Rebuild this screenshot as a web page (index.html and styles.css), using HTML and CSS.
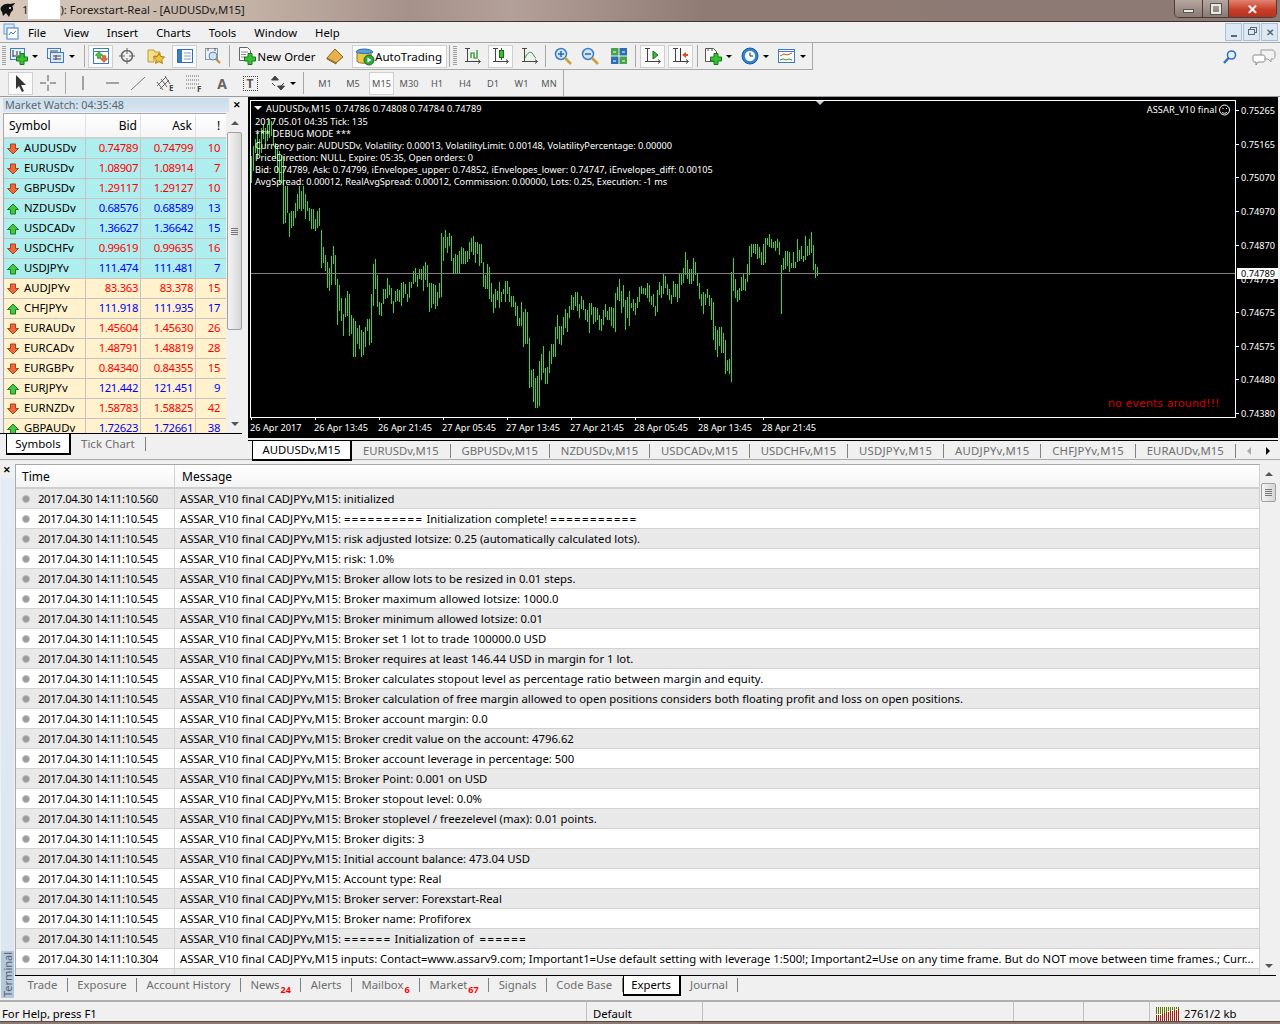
FILE: index.html
```html
<!DOCTYPE html>
<html lang="en">
<head>
    <meta charset="UTF-8">
    <title>Forexstart-Real - [AUDUSDv,M15]</title>
    <link rel="stylesheet" href="styles.css">
</head>
<body>
    <svg class="defs" width="0" height="0">
        <defs>
            <symbol id="plus" viewBox="0 0 12 12"><path d="M4 .5h4v3.500h3.500v4H8v3.500H4V8H.5V4H4z" fill="#35c035" stroke="#157a15"/></symbol>
            <symbol id="up" viewBox="0 0 12 12"><path d="M6 1l5.500 5.500H8.500V11h-5V6.500H.5z" fill="#43c843" stroke="#1d7a1d"/></symbol>
            <symbol id="down" viewBox="0 0 12 12"><path d="M6 11L.5 5.500h3V1h5v4.500h3z" fill="#f0683a" stroke="#a8401a"/></symbol>
            <symbol id="axes" viewBox="0 0 18 18"><path d="M3.500 1v14M1 14.500h15M6 1.500H1M14 12.500l2.500 2-2.500 2" fill="none" stroke="#444"/></symbol>
        </defs>
    </svg>

    <header class="titlebar">
        <svg class="bull" width="16" height="18" viewBox="0 0 16 18"><path d="M1 5C3 2 7 1 10 2l5-1c-1 2-2 3-3 3 2 2 1 5-1 6l-2 5-3-4-3 3-1-4C1 9 0 7 1 5z" fill="#111"/><circle cx="10" cy="6" r="1" fill="#fff"/></svg>
        <span class="title-one">1</span>
        <span class="title-mask"></span>
        <span class="title-text">): Forexstart-Real - [AUDUSDv,M15]</span>
        <div class="win-buttons">
            <span class="win-btn win-min"><i></i></span>
            <span class="win-btn win-max"><i></i></span>
            <span class="win-btn win-close">✕</span>
        </div>
    </header>

    <nav class="menubar">
        <svg class="menu-icon" width="16" height="18" viewBox="0 0 16 18"><rect x="1" y="1" width="10" height="10" fill="#dbe9f8" stroke="#6d9ed4"/><rect x="4" y="5" width="11" height="11" fill="#fff" stroke="#3d7cc2"/><path d="M6 12l2-3 2 2 3-3" fill="none" stroke="#3d7cc2"/></svg>
        <span class="menu-item">File</span>
        <span class="menu-item">View</span>
        <span class="menu-item">Insert</span>
        <span class="menu-item">Charts</span>
        <span class="menu-item">Tools</span>
        <span class="menu-item">Window</span>
        <span class="menu-item">Help</span>
        <div class="mdi-buttons">
            <span class="mdi-btn"><i class="mdi-min"></i></span>
            <span class="mdi-btn"><i class="mdi-restore"></i></span>
            <span class="mdi-btn mdi-x">✕</span>
        </div>
    </nav>

    <div class="toolrow">
        <div class="toolbar toolbar-main">
            <span class="grip"></span>
            <span class="tool w36">
                <svg width="18" height="18" viewBox="0 0 18 18"><rect x=".5" y="1.500" width="14" height="11" fill="#e8f1fb" stroke="#3d7cc2"/><path d="M3 3v7M3 9h9M7 4v4M10 4v3" stroke="#333" fill="none"/><use href="#plus" x="6" y="6" width="12" height="12"/></svg>
                <b class="caret"></b>
            </span>
            <span class="tool w38">
                <svg width="18" height="18" viewBox="0 0 18 18"><rect x=".5" y="1.500" width="13" height="10" fill="#e8f1fb" stroke="#3d7cc2"/><rect x="3.500" y="5.500" width="13" height="10" fill="#dbe9f8" stroke="#3d7cc2"/><path d="M3 4h8M6 9h8M6 12h8M9 8v5" stroke="#445" fill="none"/></svg>
                <b class="caret"></b>
            </span>
            <span class="sep ml4"></span>
            <span class="tool pressed w25 ml3">
                <svg width="18" height="18" viewBox="0 0 18 18"><rect x="1.500" y="1.500" width="15" height="15" fill="#fff" stroke="#3d7cc2"/><path d="M1.500 4.500h15" stroke="#3d7cc2"/><use href="#up" x="3" y="4" width="8" height="8"/><use href="#down" x="8" y="8" width="8" height="8"/></svg>
            </span>
            <span class="tool w28">
                <svg width="18" height="18" viewBox="0 0 18 18"><circle cx="9" cy="9" r="5.500" fill="none" stroke="#666" stroke-width="1.500"/><path d="M9 1v6M9 11v6M1 9h6M11 9h6" stroke="#666"/></svg>
            </span>
            <span class="tool w29">
                <svg width="18" height="18" viewBox="0 0 18 18"><path d="M1 3h6l1 2h5v4H7v6H1z" fill="#f6dd8a" stroke="#b89a3c"/><path d="M12 6l1.700 3.500 3.800.5-2.800 2.600.7 3.800-3.400-1.800-3.400 1.800.7-3.800L6.500 10l3.800-.5z" fill="#f4c531" stroke="#a67c12"/></svg>
            </span>
            <span class="tool pressed w25 ml2">
                <svg width="18" height="18" viewBox="0 0 18 18"><rect x="1.500" y="2.500" width="15" height="13" fill="#fff" stroke="#2f6db5"/><rect x="2" y="3" width="4" height="12" fill="#3d7cc2"/><path d="M8 6h7M8 9h7M8 12h7" stroke="#7a9cc4"/></svg>
            </span>
            <span class="tool w32">
                <svg width="18" height="18" viewBox="0 0 18 18"><rect x="1.500" y="1.500" width="12" height="11" fill="#eef2f7" stroke="#8a94a3"/><path d="M4 1v3M11 1v3" stroke="#556"/><circle cx="9" cy="9" r="4" fill="#cfe3f5" stroke="#5e87b0"/><path d="M12 12l4 4" stroke="#b98a2c" stroke-width="2"/></svg>
            </span>
            <span class="sep"></span>
            <span class="tool w88 text-tool">
                <svg width="18" height="20" viewBox="0 0 18 20"><path d="M1.500 1.500h8l3 3v10h-11z" fill="#fff" stroke="#666"/><path d="M3 6h7M3 8.500h5M3 11h4" stroke="#888"/><use href="#plus" x="6" y="7" width="12" height="12"/></svg>
                <span>New Order</span>
            </span>
            <span class="tool w34">
                <svg width="18" height="18" viewBox="0 0 18 18"><path d="M1 11L9 2l8 8-7 6z" fill="#e8b24a" stroke="#8a641c"/><path d="M1 11l9 5v1L1 12z" fill="#fff3c8" stroke="#8a641c"/></svg>
            </span>
            <span class="tool pressed w95 auto-tool">
                <svg width="20" height="20" viewBox="0 0 20 20"><path d="M2 6c0-3 14-3 14 0v9c0 3-14 3-14 0z" fill="#ecc84a" stroke="#8c7420"/><path d="M1 6c1-4 15-4 17 0-3 2-14 2-17 0z" fill="#5f9fd8" stroke="#2f6da8"/><circle cx="14" cy="14" r="5" fill="#2fa83a" stroke="#1a6e22"/><path d="M12.500 11.500l4 2.500-4 2.500z" fill="#fff"/></svg>
                <span>AutoTrading</span>
            </span>
            <span class="sep ml2"></span>
            <span class="grip ml3"></span>
            <span class="tool w24 ml4">
                <svg width="18" height="18" viewBox="0 0 18 18"><use href="#axes"/><path d="M7 11V6h3v5h3V3" fill="none" stroke="#1e8a1e" stroke-width="1.200"/></svg>
            </span>
            <span class="tool pressed w25 ml3">
                <svg width="18" height="18" viewBox="0 0 18 18"><use href="#axes"/><path d="M9.500 1v12" stroke="#1e6a1e"/><rect x="7.500" y="3.500" width="4" height="7" fill="#35c035" stroke="#156a15"/></svg>
            </span>
            <span class="tool w26 ml4">
                <svg width="18" height="18" viewBox="0 0 18 18"><use href="#axes"/><path d="M4 11c2-5 5-7 7-5s2 4 4 5" fill="none" stroke="#1e9a3a"/></svg>
            </span>
            <span class="sep ml2"></span>
            <span class="tool w27 ml3">
                <svg width="18" height="18" viewBox="0 0 18 18"><circle cx="7" cy="7" r="5.500" fill="#cfe6fa" stroke="#3d7cc2" stroke-width="1.500"/><path d="M4 7h6M7 4v6" stroke="#2c64a8" stroke-width="1.500"/><path d="M11 11l6 6" stroke="#c9a033" stroke-width="2.500"/></svg>
            </span>
            <span class="tool w28">
                <svg width="18" height="18" viewBox="0 0 18 18"><circle cx="7" cy="7" r="5.500" fill="#cfe6fa" stroke="#3d7cc2" stroke-width="1.500"/><path d="M4 7h6" stroke="#2c64a8" stroke-width="1.500"/><path d="M11 11l6 6" stroke="#c9a033" stroke-width="2.500"/></svg>
            </span>
            <span class="tool w29">
                <svg width="18" height="18" viewBox="0 0 18 18"><rect x="1" y="1" width="7.500" height="7.500" fill="#47a447"/><rect x="9.500" y="1" width="7.500" height="7.500" fill="#2f6db5"/><rect x="1" y="9.500" width="7.500" height="7.500" fill="#2f6db5"/><rect x="9.500" y="9.500" width="7.500" height="7.500" fill="#47a447"/><path d="M3 5h3M12 5h3M3 14h3M12 14h3" stroke="#fff"/></svg>
            </span>
            <span class="sep ml2"></span>
            <span class="tool pressed w25 ml4">
                <svg width="18" height="18" viewBox="0 0 18 18"><use href="#axes"/><path d="M9 4l5 4-5 4z" fill="#35c035" stroke="#156a15"/></svg>
            </span>
            <span class="tool pressed w25 ml3">
                <svg width="18" height="18" viewBox="0 0 18 18"><use href="#axes"/><path d="M8.500 1v13" stroke="#333"/><path d="M10 8l4-3v2h2v2h-2v2z" fill="#d9531e"/></svg>
            </span>
            <span class="sep ml4"></span>
            <span class="tool w34 ml3">
                <svg width="18" height="18" viewBox="0 0 18 18"><path d="M1.500 1.500h8l3 3v10h-11z" fill="#fff" stroke="#555"/><path d="M4 1v3M8 1v3" stroke="#555"/><use href="#plus" x="6" y="6" width="12" height="12"/></svg>
                <b class="caret"></b>
            </span>
            <span class="tool w34 ml3">
                <svg width="18" height="18" viewBox="0 0 18 18"><circle cx="9" cy="9" r="8" fill="#2f80d0" stroke="#1c5a9c"/><circle cx="9" cy="9" r="5.200" fill="#f4f6f8"/><path d="M9 5.500V9h3" fill="none" stroke="#333"/></svg>
                <b class="caret"></b>
            </span>
            <span class="tool w34 ml3">
                <svg width="18" height="18" viewBox="0 0 18 18"><rect x=".5" y="2.500" width="16" height="13" fill="#fff" stroke="#3d7cc2"/><path d="M.5 4.500h16" stroke="#3d7cc2"/><path d="M2 9l4-2 3 1 5-2" fill="none" stroke="#c2571a"/><path d="M2 13l3-1 3 1 3-1 3 1" fill="none" stroke="#2f9a2f"/></svg>
                <b class="caret"></b>
            </span>
        </div>
        <div class="help-icons">
            <svg width="16" height="16" viewBox="0 0 16 16"><circle cx="9.500" cy="6" r="4" fill="#eaf3fc" stroke="#2f6fc8" stroke-width="1.600"/><path d="M6.500 9L2 14" stroke="#2f6fc8" stroke-width="2.400"/></svg>
            <svg width="24" height="18" viewBox="0 0 24 18"><path d="M9 2h11c2 0 3 1 3 3v3c0 2-1 3-3 3h-1v3l-3-3H9z" fill="#f2f2f2" stroke="#9a9a9a"/><path d="M2 7h9c1 0 2 1 2 2v3c0 1-1 2-2 2H6l-2 3v-3H2c-.5 0-1-1-1-2V9c0-1 .5-2 1-2z" fill="#fff" stroke="#8a8a8a"/></svg>
        </div>
    </div>

    <div class="toolrow">
        <div class="toolbar toolbar-draw">
            <span class="tool pressed w25 ml8">
                <svg width="16" height="18" viewBox="0 0 16 18"><path d="M3 1l10 10H8l3 6-2 1-3-6-3 3z" fill="#333"/></svg>
            </span>
            <span class="tool w30">
                <svg width="18" height="18" viewBox="0 0 18 18"><path d="M9 1v6M9 11v6M1 9h6M11 9h6" stroke="#555"/></svg>
            </span>
            <span class="sep ml2"></span>
            <span class="tool w34">
                <svg width="18" height="18" viewBox="0 0 18 18"><path d="M9 2v14" stroke="#555"/></svg>
            </span>
            <span class="tool w24">
                <svg width="18" height="18" viewBox="0 0 18 18"><path d="M3 9h13" stroke="#555"/></svg>
            </span>
            <span class="tool w28">
                <svg width="18" height="18" viewBox="0 0 18 18"><path d="M2 16L16 3" stroke="#777"/></svg>
            </span>
            <span class="tool w28">
                <svg width="20" height="20" viewBox="0 0 20 20"><path d="M1 13l9-9M4 16l9-9M1 9l6 8M5 6l6 8M9 3l5 8" stroke="#666" fill="none"/><text class="icon-letter" x="13" y="18">E</text></svg>
            </span>
            <span class="tool w28">
                <svg width="20" height="20" viewBox="0 0 20 20"><path d="M2 3h14M2 7h14M2 11h14M2 15h10" stroke="#666" stroke-dasharray="1 1" fill="none"/><text class="icon-letter" x="13" y="19">F</text></svg>
            </span>
            <span class="tool w28"><span class="tool-a">A</span></span>
            <span class="tool w28"><span class="tool-t">T</span></span>
            <span class="tool w37">
                <svg width="16" height="16" viewBox="0 0 16 16"><path d="M5 1l3.500 4h-7zM2 8l3 3M11 15l-3.500-4h7zM14 8l-3 3" fill="#444" stroke="#444"/></svg>
                <b class="caret"></b>
            </span>
            <span class="sep ml2"></span>
            <span class="tf w28 ml7">M1</span>
            <span class="tf w28">M5</span>
            <span class="tf pressed w25 ml2">M15</span>
            <span class="tf w28 ml1">M30</span>
            <span class="tf w28">H1</span>
            <span class="tf w28">H4</span>
            <span class="tf w28">D1</span>
            <span class="tf w29">W1</span>
            <span class="tf w26">MN</span>
        </div>
    </div>

    <main class="workspace">
        <section class="market">
            <div class="market-title">
                <span class="market-caption">Market Watch: 04:35:48</span>
                <span class="close-x">✕</span>
            </div>
            <div class="market-body">
                <div class="market-table">
                    <div class="market-head">
                        <span class="c-sym">Symbol</span><span class="c-num">Bid</span><span class="c-num">Ask</span><span class="c-spr">!</span>
                    </div>
                    <div class="mrow cyan dn"><svg width="12" height="12"><use href="#down"/></svg><span class="c-name">AUDUSDv</span><span class="c-num">0.74789</span><span class="c-num">0.74799</span><span class="c-spr">10</span></div>
                    <div class="mrow cyan dn"><svg width="12" height="12"><use href="#down"/></svg><span class="c-name">EURUSDv</span><span class="c-num">1.08907</span><span class="c-num">1.08914</span><span class="c-spr">7</span></div>
                    <div class="mrow cyan dn"><svg width="12" height="12"><use href="#down"/></svg><span class="c-name">GBPUSDv</span><span class="c-num">1.29117</span><span class="c-num">1.29127</span><span class="c-spr">10</span></div>
                    <div class="mrow cyan up"><svg width="12" height="12"><use href="#up"/></svg><span class="c-name">NZDUSDv</span><span class="c-num">0.68576</span><span class="c-num">0.68589</span><span class="c-spr">13</span></div>
                    <div class="mrow cyan up"><svg width="12" height="12"><use href="#up"/></svg><span class="c-name">USDCADv</span><span class="c-num">1.36627</span><span class="c-num">1.36642</span><span class="c-spr">15</span></div>
                    <div class="mrow cyan dn"><svg width="12" height="12"><use href="#down"/></svg><span class="c-name">USDCHFv</span><span class="c-num">0.99619</span><span class="c-num">0.99635</span><span class="c-spr">16</span></div>
                    <div class="mrow cyan up"><svg width="12" height="12"><use href="#up"/></svg><span class="c-name">USDJPYv</span><span class="c-num">111.474</span><span class="c-num">111.481</span><span class="c-spr">7</span></div>
                    <div class="mrow cream dn"><svg width="12" height="12"><use href="#down"/></svg><span class="c-name">AUDJPYv</span><span class="c-num">83.363</span><span class="c-num">83.378</span><span class="c-spr">15</span></div>
                    <div class="mrow cream up"><svg width="12" height="12"><use href="#up"/></svg><span class="c-name">CHFJPYv</span><span class="c-num">111.918</span><span class="c-num">111.935</span><span class="c-spr">17</span></div>
                    <div class="mrow cream dn"><svg width="12" height="12"><use href="#down"/></svg><span class="c-name">EURAUDv</span><span class="c-num">1.45604</span><span class="c-num">1.45630</span><span class="c-spr">26</span></div>
                    <div class="mrow cream dn"><svg width="12" height="12"><use href="#down"/></svg><span class="c-name">EURCADv</span><span class="c-num">1.48791</span><span class="c-num">1.48819</span><span class="c-spr">28</span></div>
                    <div class="mrow cream dn"><svg width="12" height="12"><use href="#down"/></svg><span class="c-name">EURGBPv</span><span class="c-num">0.84340</span><span class="c-num">0.84355</span><span class="c-spr">15</span></div>
                    <div class="mrow cream up"><svg width="12" height="12"><use href="#up"/></svg><span class="c-name">EURJPYv</span><span class="c-num">121.442</span><span class="c-num">121.451</span><span class="c-spr">9</span></div>
                    <div class="mrow cream dn"><svg width="12" height="12"><use href="#down"/></svg><span class="c-name">EURNZDv</span><span class="c-num">1.58783</span><span class="c-num">1.58825</span><span class="c-spr">42</span></div>
                    <div class="mrow cream up"><svg width="12" height="12"><use href="#up"/></svg><span class="c-name">GBPAUDv</span><span class="c-num">1.72623</span><span class="c-num">1.72661</span><span class="c-spr">38</span></div>
                </div>
                <div class="scrollbar market-scroll">
                    <span class="sb-btn"><b class="sb-up"></b></span>
                    <span class="sb-thumb market-thumb"><i></i></span>
                    <span class="sb-track"></span>
                    <span class="sb-btn"><b class="sb-down"></b></span>
                </div>
            </div>
            <div class="tabs market-tabs">
                <span class="tab active">Symbols</span>
                <span class="tab">Tick Chart</span>
            </div>
        </section>

        <section class="chart-pane">
            <svg class="chart" width="1030" height="341" viewBox="248 97 1030 341">
                <rect x="250.500" y="100.500" width="985" height="317" fill="none" stroke="#fff"/>
                <path d="M254 106h8l-4 4z" fill="#fff"/>
                <path d="M816 101h8l-4 4z" fill="#c3cdd8"/>
                <path id="bars" fill="none" stroke="#28e028" shape-rendering="crispEdges"/>
                <path d="M251 273.500h984" stroke="#808080"/>
                <text class="ct ct-wide" x="266" y="112">AUDUSDv,M15 &#160;0.74786 0.74808 0.74784 0.74789</text>
                <text class="ct" x="255" y="125">2017.05.01 04:35 Tick: 135</text>
                <text class="ct" x="255" y="137">*** DEBUG MODE ***</text>
                <text class="ct" x="255" y="149">Currency pair: AUDUSDv, Volatility: 0.00013, VolatilityLimit: 0.00148, VolatilityPercentage: 0.00000</text>
                <text class="ct" x="255" y="161">PriceDirection: NULL, Expire: 05:35, Open orders: 0</text>
                <text class="ct" x="255" y="173">Bid: 0.74789, Ask: 0.74799, iEnvelopes_upper: 0.74852, iEnvelopes_lower: 0.74747, iEnvelopes_diff: 0.00105</text>
                <text class="ct" x="255" y="185">AvgSpread: 0.00012, RealAvgSpread: 0.00012, Commission: 0.00000, Lots: 0.25, Execution: -1 ms</text>
                <text class="ct ct-wide" x="1217" y="113" text-anchor="end">ASSAR_V10 final</text>
                <g fill="none" stroke="#fff">
                    <circle cx="1224.500" cy="110" r="5"/>
                    <path d="M1222 112.500c1.500 1 3.500 1 5 0M1222.500 108.500h1M1226 108.500h1"/>
                    <path d="M1236 110.500h3M1236 144.500h3M1236 177.500h3M1236 211.500h3M1236 245.500h3M1236 312.500h3M1236 346.500h3M1236 379.500h3M1236 413.500h3"/>
                    <path d="M251.500 417v3M315.500 417v3M379.500 417v3M443.500 417v3M507.500 417v3M571.500 417v3M635.500 417v3M699.500 417v3M763.500 417v3"/>
                </g>
                <text class="ct" x="1241" y="114">0.75265</text>
                <text class="ct" x="1241" y="148">0.75165</text>
                <text class="ct" x="1241" y="181">0.75070</text>
                <text class="ct" x="1241" y="215">0.74970</text>
                <text class="ct" x="1241" y="249">0.74870</text>
                <text class="ct" x="1241" y="283">0.74775</text>
                <text class="ct" x="1241" y="316">0.74675</text>
                <text class="ct" x="1241" y="350">0.74575</text>
                <text class="ct" x="1241" y="383">0.74480</text>
                <text class="ct" x="1241" y="417">0.74380</text>
                <rect x="1237" y="268" width="41" height="11" fill="#fff"/>
                <text class="ct bid-label" x="1241" y="277">0.74789</text>
                <text class="ct" x="250" y="431">26 Apr 2017</text>
                <text class="ct" x="314" y="431">26 Apr 13:45</text>
                <text class="ct" x="378" y="431">26 Apr 21:45</text>
                <text class="ct" x="442" y="431">27 Apr 05:45</text>
                <text class="ct" x="506" y="431">27 Apr 13:45</text>
                <text class="ct" x="570" y="431">27 Apr 21:45</text>
                <text class="ct" x="634" y="431">28 Apr 05:45</text>
                <text class="ct" x="698" y="431">28 Apr 13:45</text>
                <text class="ct" x="762" y="431">28 Apr 21:45</text>
                <text class="no-events" x="1108" y="407">no events around!!!</text>
            </svg>
            <div class="tabs chart-tabs">
                <span class="tab active">AUDUSDv,M15</span>
                <span class="tab">EURUSDv,M15</span>
                <span class="tab">GBPUSDv,M15</span>
                <span class="tab">NZDUSDv,M15</span>
                <span class="tab">USDCADv,M15</span>
                <span class="tab">USDCHFv,M15</span>
                <span class="tab tab-jpy">USDJPYv,M15</span>
                <span class="tab tab-jpy">AUDJPYv,M15</span>
                <span class="tab tab-jpy">CHFJPYv,M15</span>
                <span class="tab">EURAUDv,M15</span>
                <span class="tab-arrows"><b class="arrow-left"></b><b class="arrow-right"></b></span>
            </div>
        </section>
    </main>

    <section class="terminal">
        <div class="term-side">
            <span class="close-x">✕</span>
            <span class="term-strip"><span class="term-label">Terminal</span></span>
        </div>
        <div class="term-main">
            <div class="term-top">
                <div class="log">
                    <div class="log-head"><span class="col-time">Time</span><span class="col-msg">Message</span></div>
                    <div class="log-row"><span class="col-time"><i class="dot"></i><span class="stamp">2017.04.30 14:11:10.560</span></span><span class="col-msg">ASSAR_V10 final CADJPYv,M15: initialized</span></div>
                    <div class="log-row"><span class="col-time"><i class="dot"></i><span class="stamp">2017.04.30 14:11:10.545</span></span><span class="col-msg">ASSAR_V10 final CADJPYv,M15: <span class="eq">==========</span> Initialization complete! <span class="eq">===========</span></span></div>
                    <div class="log-row"><span class="col-time"><i class="dot"></i><span class="stamp">2017.04.30 14:11:10.545</span></span><span class="col-msg">ASSAR_V10 final CADJPYv,M15: risk adjusted lotsize: 0.25 (automatically calculated lots).</span></div>
                    <div class="log-row"><span class="col-time"><i class="dot"></i><span class="stamp">2017.04.30 14:11:10.545</span></span><span class="col-msg">ASSAR_V10 final CADJPYv,M15: risk: 1.0%</span></div>
                    <div class="log-row"><span class="col-time"><i class="dot"></i><span class="stamp">2017.04.30 14:11:10.545</span></span><span class="col-msg">ASSAR_V10 final CADJPYv,M15: Broker allow lots to be resized in 0.01 steps.</span></div>
                    <div class="log-row"><span class="col-time"><i class="dot"></i><span class="stamp">2017.04.30 14:11:10.545</span></span><span class="col-msg">ASSAR_V10 final CADJPYv,M15: Broker maximum allowed lotsize: 1000.0</span></div>
                    <div class="log-row"><span class="col-time"><i class="dot"></i><span class="stamp">2017.04.30 14:11:10.545</span></span><span class="col-msg">ASSAR_V10 final CADJPYv,M15: Broker minimum allowed lotsize: 0.01</span></div>
                    <div class="log-row"><span class="col-time"><i class="dot"></i><span class="stamp">2017.04.30 14:11:10.545</span></span><span class="col-msg">ASSAR_V10 final CADJPYv,M15: Broker set 1 lot to trade 100000.0 USD</span></div>
                    <div class="log-row"><span class="col-time"><i class="dot"></i><span class="stamp">2017.04.30 14:11:10.545</span></span><span class="col-msg">ASSAR_V10 final CADJPYv,M15: Broker requires at least 146.44 USD in margin for 1 lot.</span></div>
                    <div class="log-row"><span class="col-time"><i class="dot"></i><span class="stamp">2017.04.30 14:11:10.545</span></span><span class="col-msg">ASSAR_V10 final CADJPYv,M15: Broker calculates stopout level as percentage ratio between margin and equity.</span></div>
                    <div class="log-row"><span class="col-time"><i class="dot"></i><span class="stamp">2017.04.30 14:11:10.545</span></span><span class="col-msg">ASSAR_V10 final CADJPYv,M15: Broker calculation of free margin allowed to open positions considers both floating profit and loss on open positions.</span></div>
                    <div class="log-row"><span class="col-time"><i class="dot"></i><span class="stamp">2017.04.30 14:11:10.545</span></span><span class="col-msg">ASSAR_V10 final CADJPYv,M15: Broker account margin: 0.0</span></div>
                    <div class="log-row"><span class="col-time"><i class="dot"></i><span class="stamp">2017.04.30 14:11:10.545</span></span><span class="col-msg">ASSAR_V10 final CADJPYv,M15: Broker credit value on the account: 4796.62</span></div>
                    <div class="log-row"><span class="col-time"><i class="dot"></i><span class="stamp">2017.04.30 14:11:10.545</span></span><span class="col-msg">ASSAR_V10 final CADJPYv,M15: Broker account leverage in percentage: 500</span></div>
                    <div class="log-row"><span class="col-time"><i class="dot"></i><span class="stamp">2017.04.30 14:11:10.545</span></span><span class="col-msg">ASSAR_V10 final CADJPYv,M15: Broker Point: 0.001 on USD</span></div>
                    <div class="log-row"><span class="col-time"><i class="dot"></i><span class="stamp">2017.04.30 14:11:10.545</span></span><span class="col-msg">ASSAR_V10 final CADJPYv,M15: Broker stopout level: 0.0%</span></div>
                    <div class="log-row"><span class="col-time"><i class="dot"></i><span class="stamp">2017.04.30 14:11:10.545</span></span><span class="col-msg">ASSAR_V10 final CADJPYv,M15: Broker stoplevel / freezelevel (max): 0.01 points.</span></div>
                    <div class="log-row"><span class="col-time"><i class="dot"></i><span class="stamp">2017.04.30 14:11:10.545</span></span><span class="col-msg">ASSAR_V10 final CADJPYv,M15: Broker digits: 3</span></div>
                    <div class="log-row"><span class="col-time"><i class="dot"></i><span class="stamp">2017.04.30 14:11:10.545</span></span><span class="col-msg">ASSAR_V10 final CADJPYv,M15: Initial account balance: 473.04 USD</span></div>
                    <div class="log-row"><span class="col-time"><i class="dot"></i><span class="stamp">2017.04.30 14:11:10.545</span></span><span class="col-msg">ASSAR_V10 final CADJPYv,M15: Account type: Real</span></div>
                    <div class="log-row"><span class="col-time"><i class="dot"></i><span class="stamp">2017.04.30 14:11:10.545</span></span><span class="col-msg">ASSAR_V10 final CADJPYv,M15: Broker server: Forexstart-Real</span></div>
                    <div class="log-row"><span class="col-time"><i class="dot"></i><span class="stamp">2017.04.30 14:11:10.545</span></span><span class="col-msg">ASSAR_V10 final CADJPYv,M15: Broker name: Profiforex</span></div>
                    <div class="log-row"><span class="col-time"><i class="dot"></i><span class="stamp">2017.04.30 14:11:10.545</span></span><span class="col-msg">ASSAR_V10 final CADJPYv,M15: <span class="eq">======</span> Initialization of &#160;<span class="eq">======</span></span></div>
                    <div class="log-row"><span class="col-time"><i class="dot"></i><span class="stamp">2017.04.30 14:11:10.304</span></span><span class="col-msg">ASSAR_V10 final CADJPYv,M15 inputs: Contact=www.assarv9.com; Important1=Use default setting with leverage 1:500!; Important2=Use on any time frame. But do NOT move between time frames.; Curr...</span></div>
                    <div class="log-row"><span class="col-time"><i class="dot"></i><span class="stamp">2017.04.30 14:11:10.304</span></span><span class="col-msg">Expert ASSAR_V10 final CADJPYv,AUDJPYv,M15: loaded successfully</span></div>
                </div>
                <div class="scrollbar term-scroll">
                    <span class="sb-btn"><b class="sb-up"></b></span>
                    <span class="sb-thumb term-thumb"><i></i></span>
                    <span class="sb-track"></span>
                    <span class="sb-btn"><b class="sb-down"></b></span>
                </div>
            </div>
            <div class="tabs term-tabs">
                <span class="tab">Trade</span>
                <span class="tab">Exposure</span>
                <span class="tab">Account History</span>
                <span class="tab">News<sub>24</sub></span>
                <span class="tab">Alerts</span>
                <span class="tab">Mailbox<sub>6</sub></span>
                <span class="tab">Market<sub>67</sub></span>
                <span class="tab">Signals</span>
                <span class="tab">Code Base</span>
                <span class="tab active">Experts</span>
                <span class="tab">Journal</span>
            </div>
        </div>
    </section>

    <footer class="statusbar">
        <span class="st st-help">For Help, press F1</span>
        <span class="st st-profile">Default</span>
        <span class="st st-a"></span>
        <span class="st st-b"></span>
        <span class="st st-c"></span>
        <span class="st st-conn">
            <svg width="24" height="14" viewBox="0 0 24 14"><path d="M.5 0v7M2.500 0v7M4.500 0v7M6.500 0v7M8.500 0v6M10.500 0v5M12.500 0v4M14.500 0v4M16.500 0v3M18.500 0v3M20.500 0v2M22.500 0v2" stroke="#5f7a00"/><path d="M.5 8v6M2.500 8v6M4.500 8v6M6.500 7v7M8.500 6v8M10.500 5v9M12.500 5v9M14.500 4v10M16.500 4v10M18.500 3v11M20.500 3v11M22.500 2v12" stroke="#a02010"/></svg>
            2761/2 kb
        </span>
    </footer>

    <script src="chart.js"></script>
</body>
</html>
```

FILE: styles.css
```css
* {
    box-sizing: border-box;
}

html, body {
    margin: 0;
    padding: 0;
    height: 1024px;
    overflow: hidden;
}

body {
    width: 1280px;
    font-family: "Noto Sans", Arial, sans-serif;
    font-size: 11.3px;
    color: #000;
    background-color: #f0f0f0;
    border-bottom: 2px solid #8d7a72;
    display: flex;
    flex-direction: column;
}

.defs {
    position: absolute;
}

/* title bar */
.titlebar {
    height: 22px;
    flex: none;
    display: flex;
    align-items: center;
    padding-bottom: 2px;
    background: linear-gradient(90deg, #d6c9bc 0, #c2b0a4 20%, #a5918a 32%, #b3a098 40%, #8f7b74 55%, #8d7a74 100%);
    border-bottom: 1px solid #3c3230;
    position: relative;
}

.bull {
    margin: 2px 0 0 0;
}

.title-one {
    margin-left: 6px;
    color: #222;
}

.title-mask {
    width: 32px;
    height: 19px;
    background-color: #fff;
}

.title-text {
    color: #1b1b1b;
}

.win-buttons {
    position: absolute;
    right: 3px;
    top: 0;
    height: 18px;
    display: flex;
    border: 1px solid #4a3c38;
    border-top: none;
    border-radius: 0 0 5px 5px;
    overflow: hidden;
}

.win-btn {
    display: flex;
    align-items: center;
    justify-content: center;
    height: 17px;
    background: linear-gradient(#b5a6a0, #8a7a74);
    border-right: 1px solid #4a3c38;
}

.win-min {
    width: 28px;
}

.win-min i {
    width: 11px;
    height: 4px;
    margin-top: 5px;
    background-color: #e8e8e8;
    border: 1px solid #555;
}

.win-max {
    width: 26px;
}

.win-max i {
    width: 10px;
    height: 10px;
    border: 2px solid #e8e8e8;
    outline: 1px solid #555;
}

.win-close {
    width: 47px;
    border-right: none;
    color: #fff;
    font-size: 13px;
    font-weight: bold;
    background: linear-gradient(#e28370, #c8402a 55%, #b5321e);
}

/* menu */
.menubar {
    height: 21px;
    flex: none;
    display: flex;
    align-items: center;
    padding-left: 3px;
    border-bottom: 1px solid #a8a8a8;
}

.menu-icon {
    margin-right: 0;
}

.menu-item {
    padding: 0 9px;
}

.mdi-buttons {
    margin-left: auto;
    margin-right: 2px;
    display: flex;
    gap: 1px;
}

.mdi-btn {
    width: 17px;
    height: 18px;
    display: flex;
    align-items: center;
    justify-content: center;
    background-color: #dce8f4;
    border: 1px solid #a9c0d8;
    color: #5a6a78;
    font-size: 10px;
    font-weight: bold;
}

.mdi-min {
    width: 6px;
    height: 2px;
    margin-top: 7px;
    background-color: #5a6a78;
}

.mdi-restore {
    width: 7px;
    height: 6px;
    border: 1px solid #5a6a78;
    box-shadow: 2px -2px 0 -1px #dce8f4, 2px -2px 0 0 #5a6a78;
}

/* toolbars */
.toolrow {
    height: 27px;
    flex: none;
    display: flex;
}

.toolrow + .toolrow {
    border-bottom: 1px solid #9a9a9a;
}

.toolbar {
    display: flex;
    align-items: center;
    height: 100%;
    border-right: 1px solid #a8a8a8;
}

.toolbar-main {
    width: 813px;
    border-bottom: 1px solid #a8a8a8;
}

.toolbar-draw {
    width: 564px;
}

.grip {
    width: 4px;
    height: 20px;
    margin-left: 2px;
    background-image: repeating-linear-gradient(#a0a0a0 0 1px, transparent 1px 2px);
}

.tool, .tf {
    flex: none;
    height: 23px;
    display: flex;
    align-items: center;
    justify-content: center;
}

.pressed {
    background-color: #fafafa;
    border: 1px solid #cfcfcf;
}

.sep {
    flex: none;
    width: 1px;
    height: 22px;
    background-color: #a8a8a8;
}

.caret {
    width: 0;
    height: 0;
    margin-left: 4px;
    border-left: 3px solid transparent;
    border-right: 3px solid transparent;
    border-top: 3px solid #000;
}

.text-tool {
    gap: 2px;
    padding-left: 5px;
}

.auto-tool {
    font-size: 11.6px;
    justify-content: flex-start;
    padding-left: 2px;
    background-color: #fff;
}

.tool-a {
    font-size: 14px;
    font-weight: bold;
    color: #666;
}

.tool-t {
    width: 15px;
    height: 15px;
    border: 1px dotted #444;
    font-size: 12px;
    font-weight: bold;
    line-height: 13px;
    text-align: center;
    color: #555;
}

.icon-letter {
    font-size: 8px;
    font-weight: bold;
    fill: #444;
}

.tf {
    font-size: 9.2px;
    color: #555;
    padding-top: 1px;
}

.help-icons {
    margin-left: auto;
    padding-right: 4px;
    width: 58px;
    display: flex;
    align-items: center;
    justify-content: space-between;
}

.w24 { width: 24px; }
.w25 { width: 25px; }
.w26 { width: 26px; }
.w27 { width: 27px; }
.w28 { width: 28px; }
.w29 { width: 29px; }
.w30 { width: 30px; }
.w32 { width: 32px; }
.w34 { width: 34px; }
.w36 { width: 36px; }
.w37 { width: 37px; }
.w38 { width: 38px; }
.w88 { width: 88px; }
.w95 { width: 95px; }
.ml1 { margin-left: 1px; }
.ml2 { margin-left: 2px; }
.ml3 { margin-left: 3px; }
.ml4 { margin-left: 4px; }
.ml7 { margin-left: 7px; }
.ml8 { margin-left: 8px; }

/* market watch + chart */
.workspace {
    height: 363px;
    flex: none;
    display: flex;
    border-bottom: 1px solid #a8a8a8;
}

.market {
    width: 248px;
    flex: none;
    display: flex;
    flex-direction: column;
}

.market-title {
    height: 16px;
    flex: none;
    display: flex;
    align-items: center;
    padding: 1px 0 1px 3px;
}

.market-caption {
    width: 226px;
    height: 14px;
    line-height: 13px;
    padding-left: 2px;
    background: linear-gradient(#c9dcea, #d8e6f1);
    color: #5b6670;
    font-size: 10.8px;
}

.close-x {
    margin-left: 4px;
    font-size: 9px;
    font-weight: bold;
    line-height: 12px;
}

.market-body {
    width: 242px;
    height: 321px;
    flex: none;
    display: flex;
    padding-left: 3px;
    border-bottom: 1px solid #000;
}

.market-table {
    width: 223px;
    overflow: hidden;
    border-left: 1px solid #a8a8a8;
    border-top: 1px solid #a8a8a8;
    background-color: #fff;
}

.market-head {
    height: 25px;
    display: flex;
    align-items: center;
    background: linear-gradient(#fff, #f4f4f4);
    border-bottom: 2px solid #cfcfcf;
    font-size: 12px;
}

.c-sym {
    width: 82px;
    height: 100%;
    line-height: 23px;
    padding-left: 5px;
    border-right: 1px solid #e2e2e2;
}

.c-name {
    width: 67px;
    padding-left: 5px;
}

.c-num {
    width: 55px;
    height: 100%;
    padding-right: 2px;
    text-align: right;
    border-right: 1px solid #e2e2e2;
    line-height: 18px;
    letter-spacing: -0.35px;
}

.market-head .c-num {
    line-height: 23px;
    padding-right: 3px;
    letter-spacing: 0;
}

.c-spr {
    width: 28px;
    height: 100%;
    padding-right: 4px;
    text-align: right;
    line-height: 18px;
    letter-spacing: -0.35px;
}

.market-head .c-spr {
    line-height: 23px;
}

.mrow {
    height: 20px;
    display: flex;
    align-items: center;
    border-bottom: 1px solid #c9c2c2;
}

.mrow svg {
    margin-left: 3px;
    flex: none;
}

.mrow .c-num {
    border-right: 1px solid #c9c2c2;
}

.mrow .c-name {
    height: 100%;
    line-height: 18px;
    border-right: 1px solid #c9c2c2;
}

.cyan { background-color: #afeeee; }
.cream { background-color: #fff2cc; }
.up .c-num, .up .c-spr { color: #0000ff; }
.dn .c-num, .dn .c-spr { color: #ff0000; }

.scrollbar {
    width: 15px;
    flex: none;
    display: flex;
    flex-direction: column;
    align-items: center;
    margin-left: 1px;
    background-color: #f0f0f0;
}

.sb-btn {
    height: 19px;
    width: 100%;
    flex: none;
    display: flex;
    align-items: center;
    justify-content: center;
}

.sb-up, .sb-down {
    width: 0;
    height: 0;
    border-left: 4px solid transparent;
    border-right: 4px solid transparent;
}

.sb-up { border-bottom: 4px solid #555; }
.sb-down { border-top: 4px solid #555; }

.sb-thumb {
    width: 15px;
    flex: none;
    display: flex;
    align-items: center;
    justify-content: center;
    background: linear-gradient(90deg, #f4f4f4, #d6d6d6);
    border: 1px solid #a0a0a0;
    border-radius: 2px;
}

.sb-thumb i {
    width: 7px;
    height: 7px;
    background-image: repeating-linear-gradient(#777 0 1px, transparent 1px 2px);
}

.sb-track {
    flex: 1;
}

.market-thumb { height: 198px; }
.term-thumb { height: 19px; }

.chart-pane {
    width: 1030px;
    flex: none;
    display: flex;
    flex-direction: column;
}

.chart {
    display: block;
    background-color: #000;
    flex: none;
}

.ct {
    font-family: "Noto Sans", Arial, sans-serif;
    font-size: 9.2px;
    fill: #fff;
}

.ct-wide {
    letter-spacing: 0.1px;
}

.bid-label {
    fill: #000;
}

.no-events {
    font-family: "DejaVu Sans", sans-serif;
    font-size: 11.2px;
    fill: #d40000;
}

/* tabs */
.tabs {
    display: flex;
    color: #6e6e6e;
}

.tab {
    flex: none;
    height: 14px;
    line-height: 14px;
    padding: 0 9.5px;
    border-right: 1px solid #808080;
}

.tab.active {
    height: 20px;
    line-height: 18px;
    background-color: #fff;
    color: #000;
    border: 1px solid #000;
    border-top: none;
    border-width: 0 2px 2px 1px;
}

.tab sub {
    font-size: 9px;
    font-weight: bold;
    color: #ff0000;
    margin-left: 1px;
    vertical-align: -4px;
    line-height: 0;
}

.market-tabs {
    height: 26px;
    margin-left: 6px;
}

.market-tabs .tab {
    font-size: 11.5px;
}

.market-tabs .tab:not(.active) {
    margin-top: 3px;
    padding: 0 10px;
}

.market-tabs .tab.active {
    width: 65px;
    height: 21px;
    line-height: 20px;
    padding: 0;
    text-align: center;
}

.chart-tabs {
    margin-top: 2px;
    height: 20px;
    padding-left: 4px;
    border-top: 1px solid #000;
}

.chart-tabs .tab {
    padding: 0 10.9px;
    margin-top: 3px;
}

.chart-tabs .tab-jpy {
    letter-spacing: 0.25px;
}

.chart-tabs .tab.active {
    width: 100px;
    margin-top: 0;
    text-align: center;
    padding: 0;
}

.tab-arrows {
    margin-left: auto;
    width: 40px;
    display: flex;
    align-items: center;
    justify-content: space-between;
    padding: 0 8px 0 9px;
}

.arrow-left, .arrow-right {
    width: 0;
    height: 0;
    border-top: 4px solid transparent;
    border-bottom: 4px solid transparent;
}

.arrow-left { border-right: 4px solid #aaa; }
.arrow-right { border-left: 4px solid #000; }

/* terminal */
.terminal {
    height: 540px;
    flex: none;
    display: flex;
}

.term-side {
    width: 15px;
    flex: none;
    display: flex;
    flex-direction: column;
    padding: 4px 0 2px;
}

.term-side .close-x {
    margin-left: 3px;
}

.term-strip {
    flex: 1;
    margin: 2px 1px 0 1px;
    background: linear-gradient(#e3ebf5, #dbe6f1 85%);
    display: flex;
    flex-direction: column;
    justify-content: flex-end;
}

.term-label {
    writing-mode: vertical-rl;
    transform: rotate(180deg);
    background-color: #b4c8dc;
    color: #55606a;
    font-size: 11px;
    height: 47px;
    line-height: 13px;
    text-align: center;
}

.term-main {
    flex: 1;
    min-width: 0;
    display: flex;
    flex-direction: column;
}

.term-top {
    width: 1261px;
    height: 516px;
    flex: none;
    display: flex;
    padding-top: 4px;
    border-bottom: 1px solid #000;
}

.log {
    width: 1245px;
    overflow: hidden;
    background-color: #fff;
    border-left: 1px solid #a8a8a8;
    border-top: 1px solid #a8a8a8;
    border-right: 1px solid #d0d0d0;
}

.log-head {
    height: 24px;
    display: flex;
    align-items: center;
    background: linear-gradient(#fff, #f4f4f4);
    border-bottom: 2px solid #cfcfcf;
    font-size: 12px;
}

.log-row {
    height: 20px;
    display: flex;
    align-items: center;
    border-bottom: 1px solid #d2d2d2;
    white-space: nowrap;
}

.log-row:nth-child(even) {
    background-color: #e9e9e9;
}

.col-time {
    width: 159px;
    flex: none;
    height: 100%;
    display: flex;
    align-items: center;
    padding-left: 6px;
    border-right: 1px solid #d2d2d2;
}

.stamp {
    letter-spacing: -0.35px;
}

.col-msg {
    padding-left: 5px;
}

.eq {
    letter-spacing: 1.5px;
}

.log-head .col-msg {
    padding-left: 7px;
}

.dot {
    width: 8px;
    height: 8px;
    margin-right: 8px;
    border-radius: 50%;
    background-color: #9a9a9a;
    border: 1px solid #bcbcbc;
}

.term-tabs {
    height: 21px;
    padding-left: 3px;
}

.term-tabs .tab {
    margin-top: 2px;
}

.term-tabs .tab.active {
    width: 58px;
    margin-top: 0;
    padding: 0;
    text-align: center;
}

/* status bar */
.statusbar {
    height: 22px;
    flex: none;
    display: flex;
    align-items: center;
    border-top: 2px solid #b0b0b0;
    border-bottom: 1px solid #5a4d48;
}

.st {
    height: 100%;
    line-height: 24px;
    padding-left: 6px;
    border-right: 1px solid #c0c0c0;
    white-space: nowrap;
}

.st-help {
    width: 587px;
    padding-left: 2px;
}

.st-profile { width: 116px; }
.st-a { width: 311px; }
.st-b { width: 70px; }
.st-c { width: 66px; }

.st-conn {
    flex: 1;
    display: flex;
    align-items: center;
    gap: 4px;
    border-right: none;
    line-height: normal;
    padding-top: 4px;
}
```

FILE: chart.js
```js
// bars read off the chart, one [high, low] pair per 2px column
const segments = [
    { y: 96, bars: [180,260, 150,225, 130,170, 110,190, 130,175, 95,170, 85,130, 95,150, 85,135, 70,125, 75,120, 100,150, 140,190, 150,230, 165,260, 180,260, 180,385, 270,380, 270,350, 350,422, 345,395, 345,390, 320,365, 295,345, 270,340, 285,345, 270,340, 295,370, 315,345, 335,375, 340,400, 340,400, 370,405, 345,395, 335,390] },
    { y: 230, bars: [0,113, 52,98, 75,122, 96,175, 114,183, 78,165, 48,102, 75,165, 148,285, 165,243, 204,272, 252,318, 204,260, 183,257, 192,318, 255,312, 264,381, 273,381, 294,342, 285,357, 300,381, 306,375, 291,351, 267,303, 267,345, 192,339, 102,228, 87,177, 135,231, 216,255, 219,258, 177,222, 177,207, 144,204, 165,195, 174,222, 213,249, 183,216, 177,213, 180,216, 159,228, 156,204, 162,192, 192,216, 156,204, 156,174, 123,162, 114,156, 135,171, 117,147, 117,150, 108,183, 96,150, 105,171, 159,246, 159,234, 162,222, 165,237, 186,228, 159,204, 9,201, 21,93, 0,54, 21,69, 9,48, 18,93, 84,130, 72,130, 75,132, 63,130, 51,102, 54,102, 63,102, 63,96, 36,87, 24,66, 18,75, 36,99, 36,72, 42,108, 42,99, 96,171, 135,177, 102,177, 111,207, 159,216, 192,249, 177,234, 183,210, 156,234, 186,216, 177,192, 153,216, 153,192, 171,216, 198,231, 198,231, 216,258, 228,288, 264,288, 216,288, 246,351, 237,342, 246,342, 324,474, 420,471, 417,516, 444,534, 438,534, 393,528, 372,450, 348,429, 414,462, 411,462, 363,429, 342,402, 342,381, 291,381, 255,327, 288,342, 288,345, 261,315, 237,294, 249,306, 228,264, 195,240, 201,240, 186,228, 186,243, 222,264, 198,237, 210,240, 237,270, 240,276, 219,309, 219,255, 231,282, 231,276, 234,270, 255,300, 267,303, 240,285, 222,261, 243,270, 231,270, 231,288, 234,294, 189,306, 171,210, 147,213, 183,249, 165,231, 210,300, 201,264, 183,288, 219,234, 207,243, 219,255, 201,234, 171,216, 168,192, 174,192, 174,195, 159,204, 165,216] },
    { y: 220, bars: [228,255, 222,261, 258,288, 210,276, 186,225, 198,234, 162,222, 168,204, 192,225, 207,240, 225,252, 183,231, 192,231, 192,246, 162,234, 162,195, 144,189, 96,165, 120,177, 147,192, 147,192, 114,183, 126,165, 162,198, 189,237, 222,258, 216,282, 222,255, 207,234, 225,258, 234,300, 246,360, 318,390, 330,411, 321,378, 321,399, 339,399, 360,462, 420,453, 417,462, 156,486, 114,213, 177,234, 210,246, 204,240, 171,213, 162,210, 177,213, 132,186, 78,165, 72,111, 72,99, 72,102, 72,117, 81,114, 96,135, 72,135, 54,129, 54,75, 42,81, 57,84, 66,84, 63,93, 57,84, 66,105, 135,282, 114,150, 93,147, 93,138, 96,156, 129,144, 96,144, 126,144, 57,126, 90,123, 78,117, 108,126, 48,120, 78,108, 57,105, 36,99, 75,150, 132,174, 141,168] }
];

let x = 251.5;
let d = "";

segments.forEach(seg => {
    for (let i = 0; i < seg.bars.length; i += 2) {
        const top = Math.round(seg.y + seg.bars[i] / 3);
        const bottom = Math.round(seg.y + seg.bars[i + 1] / 3);
        d += `M${x} ${top}V${bottom}`;
        x += 2;
    }
});

document.getElementById("bars").setAttribute("d", d);
```
